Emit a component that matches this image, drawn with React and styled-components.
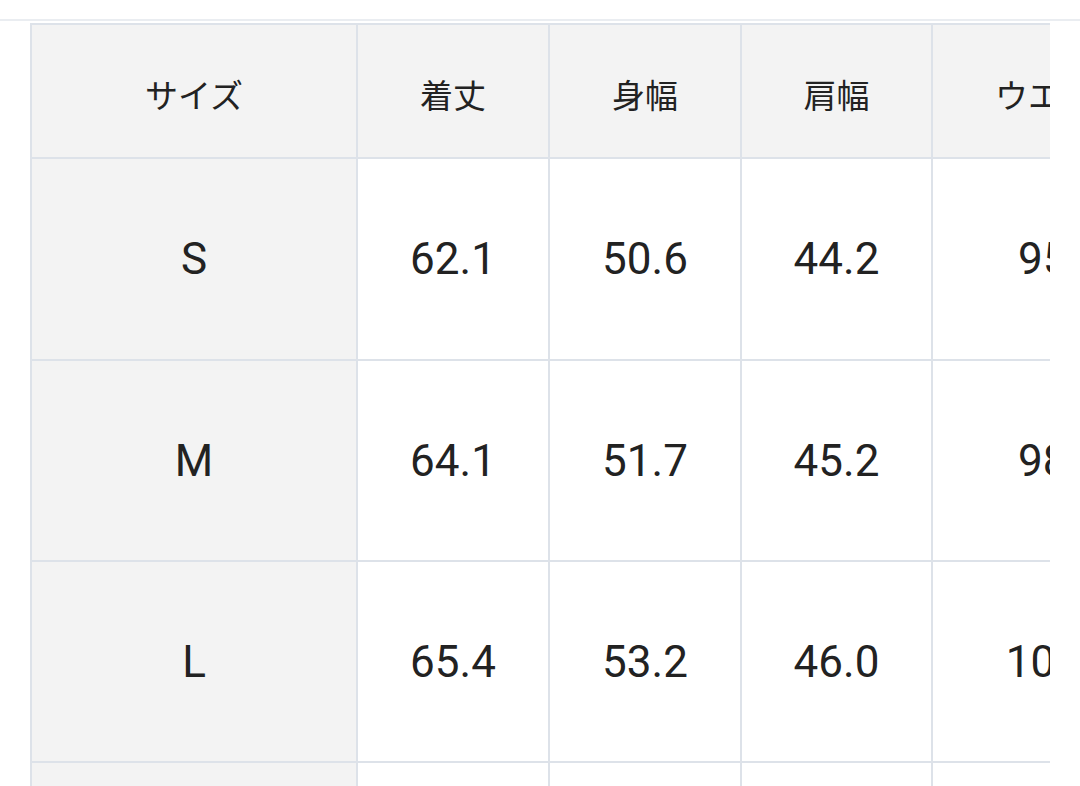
import React from 'react';
import styled, { createGlobalStyle } from 'styled-components';

const GlobalStyle = createGlobalStyle`
    * { box-sizing: border-box; }
    body {
        margin: 0;
        background: #ffffff;
        font-family: Roboto, "Noto Sans CJK JP", sans-serif;
        color: #222222;
    }
`

const Page = styled.div`
    padding-top: 19px;
    height: 786px;
    overflow: hidden;
`

const Divider = styled.div`
    height: 2px;
    background: #eaedf1;
    margin-bottom: 2px;
`

const Scroller = styled.div`
    margin-left: 30px;
    width: 1020px;
    overflow: hidden;
`

const Grid = styled.div`
    display: grid;
    grid-template-columns: 324px 190px 190px 189px 256px;
    grid-template-rows: 132px 200px 199px 199px 200px;
    gap: 2px;
    padding: 2px;
    width: max-content;
    background: #dde2e9;
`

const Cell = styled.div`
    display: flex;
    align-items: center;
    justify-content: center;
    background: ${p => (p.$shaded ? '#f3f3f3' : '#ffffff')};
    font-size: ${p => (p.$head ? '33px' : '44px')};
    padding-top: ${p => (p.$head ? '6px' : '0')};
    white-space: nowrap;
`

const headers = ['サイズ', '着丈', '身幅', '肩幅', 'ウエスト'];

const rows = [
    ['S', '62.1', '50.6', '44.2', '95.0'],
    ['M', '64.1', '51.7', '45.2', '98.0'],
    ['L', '65.4', '53.2', '46.0', '100.0'],
    ['XL', '67.0', '54.6', '47.0', '103.0'],
];

function App() {
    return (
        <Page>
            <GlobalStyle />
            <Divider />
            <Scroller>
                <Grid>
                    {headers.map(h => (
                        <Cell key={h} $head $shaded>{h}</Cell>
                    ))}
                    {rows.map(row => row.map((v, i) => (
                        <Cell key={row[0] + i} $shaded={i === 0}>{v}</Cell>
                    )))}
                </Grid>
            </Scroller>
        </Page>
    )
}

export default App;
